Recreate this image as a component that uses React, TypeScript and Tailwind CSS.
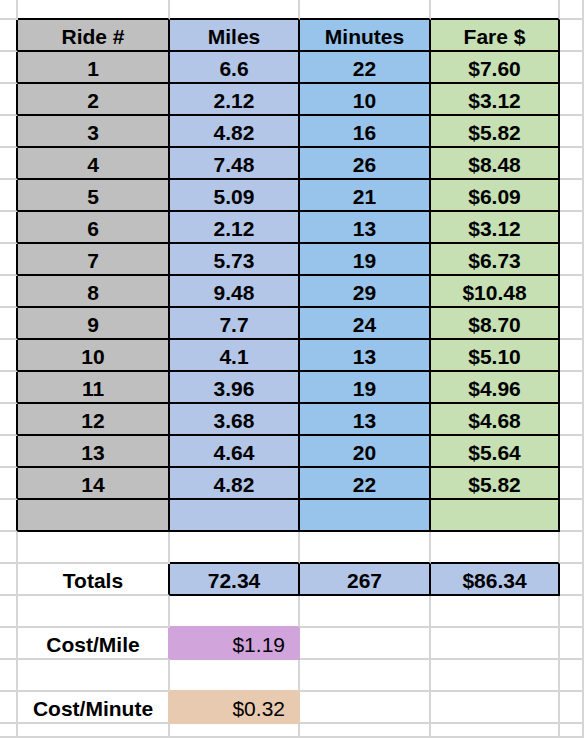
import React from "react";

type C = "g" | "k" | "p" | "t";

const RB: Record<C, string> = {
  g: "border-r-[#d5d5d5]",
  k: "border-r-black",
  p: "border-r-[#d1a5dc]",
  t: "border-r-[#e8cab0]",
};
const BB: Record<C, string> = {
  g: "border-b-[#d5d5d5]",
  k: "border-b-black",
  p: "border-b-[#d1a5dc]",
  t: "border-b-[#e8cab0]",
};

function Cell({
  r = "g",
  b = "g",
  bg = "bg-white",
  children,
  extra = "justify-center font-bold",
}: {
  r?: C;
  b?: C;
  bg?: string;
  children?: React.ReactNode;
  extra?: string;
}) {
  return (
    <div className={`flex items-center border-r-2 border-b-2 pt-[2px] ${RB[r]} ${BB[b]} ${bg} ${extra}`}>
      {children}
    </div>
  );
}

const rides: [string, string, string, string][] = [
  ["1", "6.6", "22", "$7.60"],
  ["2", "2.12", "10", "$3.12"],
  ["3", "4.82", "16", "$5.82"],
  ["4", "7.48", "26", "$8.48"],
  ["5", "5.09", "21", "$6.09"],
  ["6", "2.12", "13", "$3.12"],
  ["7", "5.73", "19", "$6.73"],
  ["8", "9.48", "29", "$10.48"],
  ["9", "7.7", "24", "$8.70"],
  ["10", "4.1", "13", "$5.10"],
  ["11", "3.96", "19", "$4.96"],
  ["12", "3.68", "13", "$4.68"],
  ["13", "4.64", "20", "$5.64"],
  ["14", "4.82", "22", "$5.82"],
  ["", "", "", ""],
];

const colBg = ["bg-[#bfbfbf]", "bg-[#b4c6e7]", "bg-[#98c4ec]", "bg-[#c6e0b4]"];

export default function App() {
  const tableRows: [string, string, string, string][] = [["Ride #", "Miles", "Minutes", "Fare $"], ...rides];
  return (
    <div
      className="grid h-[738px] w-[584px] overflow-hidden bg-white text-[21px] leading-none text-black"
      style={{
        fontFamily: "'Liberation Sans', Arial, sans-serif",
        gridTemplateColumns: "18px 152px 130px 131px 129px 1fr",
        gridTemplateRows: "20px repeat(22, 32px) 1fr",
      }}
    >
      {/* row 0 */}
      <Cell />
      <Cell b="k" />
      <Cell b="k" />
      <Cell b="k" />
      <Cell b="k" />
      <Cell />

      {tableRows.map((row, i) => (
        <React.Fragment key={i}>
          <Cell r="k" />
          {row.map((v, j) => (
            <Cell key={j} r="k" b="k" bg={colBg[j]}>
              {v}
            </Cell>
          ))}
          <Cell />
        </React.Fragment>
      ))}

      {/* blank row before totals */}
      <Cell />
      <Cell />
      <Cell b="k" />
      <Cell b="k" />
      <Cell b="k" />
      <Cell />

      {/* totals */}
      <Cell />
      <Cell r="k">Totals</Cell>
      <Cell r="k" b="k" bg="bg-[#b4c6e7]">72.34</Cell>
      <Cell r="k" b="k" bg="bg-[#b4c6e7]">267</Cell>
      <Cell r="k" b="k" bg="bg-[#b4c6e7]">$86.34</Cell>
      <Cell />

      {/* blank */}
      <Cell />
      <Cell />
      <Cell b="p" />
      <Cell />
      <Cell />
      <Cell />

      {/* cost / mile */}
      <Cell />
      <Cell r="p">Cost/Mile</Cell>
      <Cell r="p" b="p" bg="bg-[#d1a5dc]" extra="justify-end pr-[13px] font-normal">
        $1.19
      </Cell>
      <Cell />
      <Cell />
      <Cell />

      {/* blank */}
      <Cell />
      <Cell />
      <Cell b="t" />
      <Cell />
      <Cell />
      <Cell />

      {/* cost / minute */}
      <Cell />
      <Cell r="t">Cost/Minute</Cell>
      <Cell r="t" b="t" bg="bg-[#e8cab0]" extra="justify-end pr-[13px] font-normal">
        $0.32
      </Cell>
      <Cell />
      <Cell />
      <Cell />

      {/* tail */}
      <Cell />
      <Cell />
      <Cell />
      <Cell />
      <Cell />
      <Cell />
    </div>
  );
}
